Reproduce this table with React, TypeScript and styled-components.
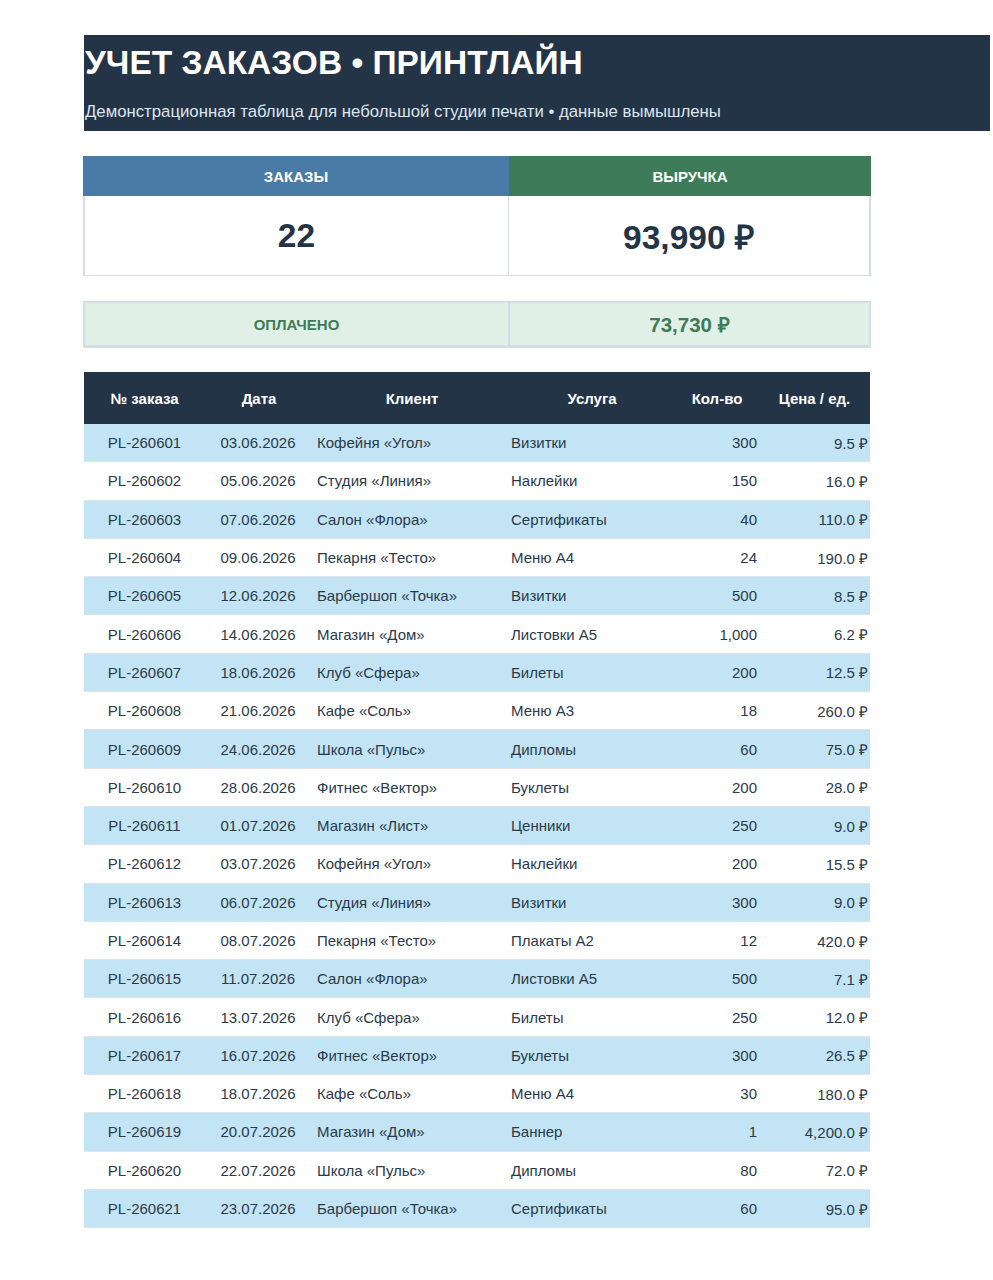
import styled, { createGlobalStyle } from 'styled-components';

const GlobalStyle = createGlobalStyle`
    body {
        margin: 0;
        background: #ffffff;
        font-family: "Liberation Sans", Arial, sans-serif;
        color: #243447;
    }
`;

const Page = styled.div`
    padding: 35px 0 40px 84px;
`;

const Banner = styled.div`
    width: 906px;
    height: 96px;
    background: #243447;
    color: #ffffff;
    box-sizing: border-box;
    padding-top: 8px;
`;

const Title = styled.h1`
    margin: 0;
    padding-left: 1px;
    font-size: 33.5px;
    font-weight: 700;
    line-height: 40px;
`;

const Subtitle = styled.div`
    margin-top: 19px;
    padding-left: 1px;
    font-size: 16.75px;
    line-height: 20px;
    color: #dde5ee;
`;

const KpiGrid = styled.div`
    margin: 25px 0 0 -1px;
    width: 788px;
    display: grid;
    grid-template-columns: 426px 362px;
`;

const KpiHead = styled.div<{ $bg: string }>`
    height: 40px;
    background: ${p => p.$bg};
    color: #ffffff;
    font-size: 15px;
    font-weight: 700;
    display: flex;
    align-items: center;
    justify-content: center;
`;

const KpiValue = styled.div<{ $last?: boolean }>`
    height: 80px;
    box-sizing: border-box;
    border: 1px solid #d4dce6;
    border-left-width: ${p => (p.$last ? '0' : '2px')};
    border-right-width: ${p => (p.$last ? '2px' : '1px')};
    border-top: 0;
    display: flex;
    align-items: center;
    justify-content: center;
    padding-top: 1px;
    font-size: 33.5px;
    font-weight: 700;
    color: #243447;
`;

const PaidGrid = styled(KpiGrid)`
    margin-top: 25px;
    background: #e1f0e7;
    border: 2px solid #d4dce6;
    border-bottom-width: 3px;
    box-sizing: border-box;
    grid-template-columns: 425px 359px;
`;

const PaidCell = styled.div<{ $big?: boolean; $first?: boolean }>`
    height: 42px;
    display: flex;
    align-items: center;
    justify-content: center;
    color: #3e7b58;
    font-weight: 700;
    font-size: ${p => (p.$big ? '20.5px' : '15px')};
    border-right: ${p => (p.$first ? '2px solid #d4dce6' : '0')};
`;

const Table = styled.table`
    margin-top: 24px;
    border-collapse: collapse;
    table-layout: fixed;
    width: 786px;
    font-size: 15px;
`;

const Th = styled.th<{ $shift?: number }>`
    height: 52px;
    background: #243447;
    color: #ffffff;
    font-weight: 700;
    font-size: 15px;
    text-align: center;
    padding: 0 ${p => Math.max(0, -(p.$shift ?? 0))}px 0 ${p => Math.max(0, p.$shift ?? 0)}px;
`;

const Tr = styled.tr<{ $odd: boolean }>`
    background: ${p => (p.$odd ? '#c2e4f4' : '#ffffff')};
    border-bottom: 1px solid #dfe4ea;
`;

const Td = styled.td<{ $align: 'left' | 'center' | 'right' }>`
    height: 37.3px;
    padding: 0 ${p => (p.$align === 'right' ? '2px' : '6px')} 0 6px;
    text-align: ${p => p.$align};
    color: #2b3a4b;
    white-space: nowrap;
`;

const QtyTd = styled(Td)`
    padding-right: 6px;
`;

type Order = [string, string, string, string, string, string];

const orders: Order[] = [
    ['PL-260601', '03.06.2026', 'Кофейня «Угол»', 'Визитки', '300', '9.5 ₽'],
    ['PL-260602', '05.06.2026', 'Студия «Линия»', 'Наклейки', '150', '16.0 ₽'],
    ['PL-260603', '07.06.2026', 'Салон «Флора»', 'Сертификаты', '40', '110.0 ₽'],
    ['PL-260604', '09.06.2026', 'Пекарня «Тесто»', 'Меню А4', '24', '190.0 ₽'],
    ['PL-260605', '12.06.2026', 'Барбершоп «Точка»', 'Визитки', '500', '8.5 ₽'],
    ['PL-260606', '14.06.2026', 'Магазин «Дом»', 'Листовки А5', '1,000', '6.2 ₽'],
    ['PL-260607', '18.06.2026', 'Клуб «Сфера»', 'Билеты', '200', '12.5 ₽'],
    ['PL-260608', '21.06.2026', 'Кафе «Соль»', 'Меню А3', '18', '260.0 ₽'],
    ['PL-260609', '24.06.2026', 'Школа «Пульс»', 'Дипломы', '60', '75.0 ₽'],
    ['PL-260610', '28.06.2026', 'Фитнес «Вектор»', 'Буклеты', '200', '28.0 ₽'],
    ['PL-260611', '01.07.2026', 'Магазин «Лист»', 'Ценники', '250', '9.0 ₽'],
    ['PL-260612', '03.07.2026', 'Кофейня «Угол»', 'Наклейки', '200', '15.5 ₽'],
    ['PL-260613', '06.07.2026', 'Студия «Линия»', 'Визитки', '300', '9.0 ₽'],
    ['PL-260614', '08.07.2026', 'Пекарня «Тесто»', 'Плакаты А2', '12', '420.0 ₽'],
    ['PL-260615', '11.07.2026', 'Салон «Флора»', 'Листовки А5', '500', '7.1 ₽'],
    ['PL-260616', '13.07.2026', 'Клуб «Сфера»', 'Билеты', '250', '12.0 ₽'],
    ['PL-260617', '16.07.2026', 'Фитнес «Вектор»', 'Буклеты', '300', '26.5 ₽'],
    ['PL-260618', '18.07.2026', 'Кафе «Соль»', 'Меню А4', '30', '180.0 ₽'],
    ['PL-260619', '20.07.2026', 'Магазин «Дом»', 'Баннер', '1', '4,200.0 ₽'],
    ['PL-260620', '22.07.2026', 'Школа «Пульс»', 'Дипломы', '80', '72.0 ₽'],
    ['PL-260621', '23.07.2026', 'Барбершоп «Точка»', 'Сертификаты', '60', '95.0 ₽'],
];

const widths = [121, 106, 194, 166, 92, 107];
const heads: [string, number][] = [
    ['№ заказа', 0],
    ['Дата', 2],
    ['Клиент', 8],
    ['Услуга', 8],
    ['Кол-во', 0],
    ['Цена / ед.', -4],
];

export default function App() {
    return (
        <>
            <GlobalStyle />
            <Page>
                <Banner>
                    <Title>УЧЕТ ЗАКАЗОВ • ПРИНТЛАЙН</Title>
                    <Subtitle>Демонстрационная таблица для небольшой студии печати • данные вымышлены</Subtitle>
                </Banner>

                <KpiGrid>
                    <KpiHead $bg="#4a7ba7">ЗАКАЗЫ</KpiHead>
                    <KpiHead $bg="#3e7b58">ВЫРУЧКА</KpiHead>
                    <KpiValue>22</KpiValue>
                    <KpiValue $last>93,990 ₽</KpiValue>
                </KpiGrid>

                <PaidGrid>
                    <PaidCell $first>ОПЛАЧЕНО</PaidCell>
                    <PaidCell $big>73,730 ₽</PaidCell>
                </PaidGrid>

                <Table>
                    <colgroup>
                        {widths.map((w, i) => <col key={i} style={{ width: w }} />)}
                    </colgroup>
                    <thead>
                        <tr>
                            {heads.map(([h, s]) => <Th key={h} $shift={s}>{h}</Th>)}
                        </tr>
                    </thead>
                    <tbody>
                        {orders.map((o, i) => (
                            <Tr key={o[0]} $odd={i % 2 === 0}>
                                <Td $align="center">{o[0]}</Td>
                                <Td $align="center">{o[1]}</Td>
                                <Td $align="left">{o[2]}</Td>
                                <Td $align="left">{o[3]}</Td>
                                <QtyTd $align="right">{o[4]}</QtyTd>
                                <Td $align="right">{o[5]}</Td>
                            </Tr>
                        ))}
                    </tbody>
                </Table>
            </Page>
        </>
    );
}
